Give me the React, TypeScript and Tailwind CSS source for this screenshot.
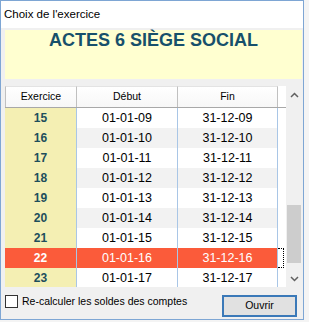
type Exercice = {
  num: number;
  debut: string;
  fin: string;
};

const EXERCICES: Exercice[] = Array.from({ length: 9 }, (_, i) => {
  const yy = String(9 + i).padStart(2, '0');
  return { num: 15 + i, debut: `01-01-${yy}`, fin: `31-12-${yy}` };
});

const SELECTED = 22;

export default function App() {
  return (
    <div className="w-[309px] h-[322px] bg-[#f4f4f4] font-['Liberation_Sans',Arial,sans-serif] text-black">
      <div className="w-[304px] h-[320px] border border-[#7ea6d4] flex flex-col">
        {/* Title bar */}
        <div className="h-[27px] bg-white flex items-center pl-[3px] text-[11.5px] shrink-0">
          Choix de l'exercice
        </div>

        {/* Client area */}
        <div className="flex-1 bg-[#f0f0f0] pl-[4px] flex flex-col">
          {/* Company banner */}
          <div className="mt-[2px] mr-[1px] h-[49px] bg-[#ffffd0] pt-[1px] text-center text-[18px] leading-[18px] font-bold text-[#17506b]">
            ACTES 6 SIÈGE SOCIAL
          </div>

          {/* Grid */}
          <div className="mt-[7px] h-[201px] flex bg-white overflow-hidden">
            <div className="w-[281px] flex flex-col">
              <div className="h-[22px] flex shrink-0 text-[10.5px] bg-gradient-to-b from-white to-[#f7f7f7] border-b border-[#a8a8a8]">
                <div className="w-[72px] flex items-center justify-center border-l border-r border-[#c0c0c0] border-t border-t-[#e3e3e3]">
                  Exercice
                </div>
                <div className="w-[101px] flex items-center justify-center border-r border-[#c0c0c0] border-t border-t-[#e3e3e3]">
                  Début
                </div>
                <div className="w-[100px] flex items-center justify-center border-r border-[#c0c0c0] border-t border-t-[#e3e3e3]">
                  Fin
                </div>
                <div className="flex-1 bg-white" />
              </div>

              {EXERCICES.map((ex, idx) => {
                const sel = ex.num === SELECTED;
                const stripe = idx % 2 === 1 ? 'bg-[#f2f2f2]' : 'bg-white';
                return (
                  <div key={ex.num} className="h-[20px] flex shrink-0">
                    <div
                      className={`w-[72px] flex items-center justify-center text-[12px] font-bold border-r border-[#a9c6e6] ${
                        sel ? 'bg-[#fb5b3a] text-white' : 'bg-[#f4efb3] text-[#1d4e5c]'
                      }`}
                    >
                      {ex.num}
                    </div>
                    <div
                      className={`w-[101px] flex items-center justify-center text-[12.5px] border-r border-[#a9c6e6] ${
                        sel ? 'bg-[#fb5b3a] text-white' : stripe
                      }`}
                    >
                      {ex.debut}
                    </div>
                    <div
                      className={`w-[100px] flex items-center justify-center text-[12.5px] border-r border-[#a9c6e6] ${
                        sel ? 'bg-[#fb5b3a] text-white' : stripe
                      }`}
                    >
                      {ex.fin}
                    </div>
                    <div className="flex-1 flex">
                      {sel && <div className="w-[6px] border-t border-r border-b border-dotted border-black" />}
                    </div>
                  </div>
                );
              })}
            </div>

            {/* Scrollbar */}
            <div className="w-[17px] bg-[#f0f0f0] flex flex-col">
              <div className="h-[17px] flex items-center justify-center">
                <svg width="9" height="6" viewBox="0 0 9 6">
                  <polyline points="1,5 4.5,1.5 8,5" fill="none" stroke="#606060" strokeWidth="1.5" />
                </svg>
              </div>
              <div className="flex-1">
                <div className="mt-[102px] ml-[1px] w-[14px] h-[58px] bg-[#cdcdcd]" />
              </div>
              <div className="h-[17px] flex items-center justify-center">
                <svg width="9" height="6" viewBox="0 0 9 6">
                  <polyline points="1,1 4.5,4.5 8,1" fill="none" stroke="#606060" strokeWidth="1.5" />
                </svg>
              </div>
            </div>
          </div>

          {/* Footer */}
          <div className="mt-[8px] flex justify-between items-start pr-[6px]">
            <label className="flex items-center gap-[4px] text-[10.5px] leading-[13px]">
              <span className="w-[13px] h-[13px] bg-white border border-[#333]" />
              Re-calculer les soldes des comptes
            </label>
            <button className="w-[75px] h-[22px] bg-[#e1e1e1] border-2 border-[#3b79b8] text-[10.5px] flex items-center justify-center">
              Ouvrir
            </button>
          </div>
        </div>
      </div>
    </div>
  );
}
